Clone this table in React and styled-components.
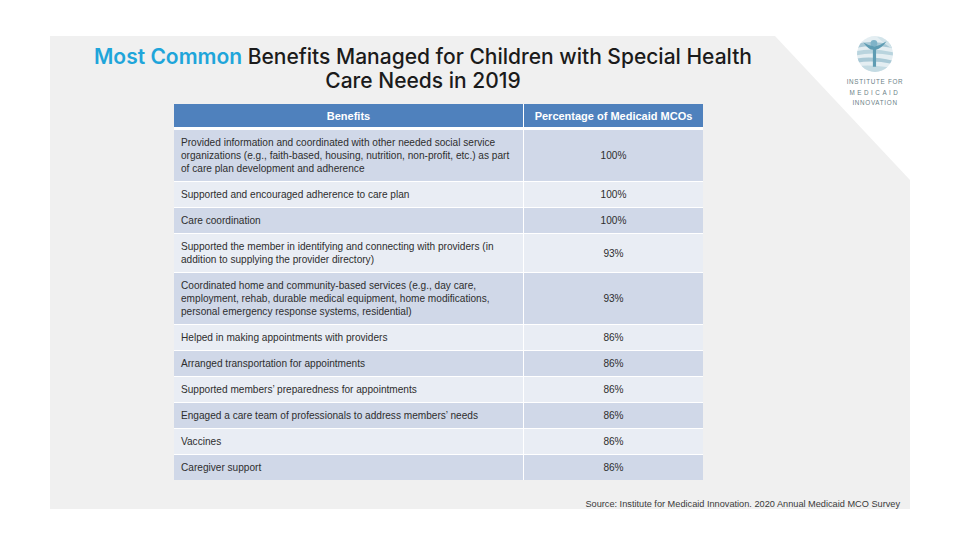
import React from "react";
import styled, { createGlobalStyle } from "styled-components";

const GlobalStyle = createGlobalStyle`
  html, body {
    margin: 0;
    padding: 0;
    background: #ffffff;
  }
  body {
    font-family: "Liberation Sans", Arial, sans-serif;
    width: 960px;
    height: 540px;
    overflow: hidden;
  }
`;

const rows = [
  {
    text:
      "Provided information and coordinated with other needed social service organizations (e.g., faith-based, housing, nutrition, non-profit, etc.) as part of care plan development and adherence",
    value: "100%",
  },
  { text: "Supported and encouraged adherence to care plan", value: "100%" },
  { text: "Care coordination", value: "100%" },
  {
    text:
      "Supported the member in identifying and connecting with providers (in addition to supplying the provider directory)",
    value: "93%",
  },
  {
    text:
      "Coordinated home and community-based services (e.g., day care, employment, rehab, durable medical equipment, home modifications, personal emergency response systems, residential)",
    value: "93%",
  },
  { text: "Helped in making appointments with providers", value: "86%" },
  { text: "Arranged transportation for appointments", value: "86%" },
  { text: "Supported members’ preparedness for appointments", value: "86%" },
  { text: "Engaged a care team of professionals to address members’ needs", value: "86%" },
  { text: "Vaccines", value: "86%" },
  { text: "Caregiver support", value: "86%" },
];

const Logo = () => (
  <LogoBox>
    <svg width="38" height="38" viewBox="0 0 36 36">
      <defs>
        <clipPath id="ring">
          <circle cx="18" cy="18" r="17" />
        </clipPath>
      </defs>
      <g clipPath="url(#ring)">
        <rect x="0" y="0" width="36" height="36" fill="#e4eef2" />
        <path d="M-2 9 Q14 4 38 10 L38 13 Q14 8 -2 13 Z" fill="#a9c9d6" />
        <path d="M-2 16 Q14 11 38 17 L38 20 Q14 15 -2 20 Z" fill="#b9d4de" />
        <path d="M-2 23 Q14 19 38 25 L38 28 Q14 23 -2 27 Z" fill="#a9c9d6" />
        <path d="M-2 30 Q14 27 38 32 L38 36 L-2 36 Z" fill="#c4dbe3" />
        <path d="M20 2 L36 2 L36 14 Q28 10 20 2 Z" fill="#d2e4ea" />
      </g>
      <circle cx="17" cy="8" r="3.2" fill="#7fb3c8" />
      <path d="M7 7 Q12 14 16 14 L16 30 L19 30 L19 14 Q24 13 29 6 Q23 10 17.5 11 Q12 10 7 7 Z" fill="#5e9cb3" />
    </svg>
    <LogoLine>INSTITUTE FOR</LogoLine>
    <LogoLine $wide>MEDICAID</LogoLine>
    <LogoLine>INNOVATION</LogoLine>
  </LogoBox>
);

export default function App() {
  return (
    <>
      <GlobalStyle />
      <Slide>
        <TopRow>
          <Title>
            <Accent>Most Common</Accent> Benefits Managed for Children with Special Health
            <br />
            Care Needs in 2019
          </Title>
          <Logo />
        </TopRow>
        <Table>
          <thead>
            <tr>
              <HeadCell $w={349}>Benefits</HeadCell>
              <HeadCell>Percentage of Medicaid MCOs</HeadCell>
            </tr>
          </thead>
          <tbody>
            {rows.map((row, i) => (
              <Row key={i} $dark={i % 2 === 0}>
                <TextCell>{row.text}</TextCell>
                <ValueCell>{row.value}</ValueCell>
              </Row>
            ))}
          </tbody>
        </Table>
        <Source>Source: Institute for Medicaid Innovation. 2020 Annual Medicaid MCO Survey</Source>
      </Slide>
    </>
  );
}

const Slide = styled.div`
  position: relative;
  isolation: isolate;
  margin: 36px 0 0 50px;
  width: 860px;
  padding-top: 9px;
  display: flex;
  flex-direction: column;

  &::before {
    content: "";
    position: absolute;
    inset: 0;
    background: #f0f0f0;
    clip-path: polygon(0 0, 725px 0, 860px 144px, 860px 100%, 0 100%);
    z-index: -1;
  }
`;

const TopRow = styled.div`
  display: flex;
  align-items: flex-start;
  height: 48px;
`;

const Title = styled.h1`
  width: 746px;
  margin: 0;
  text-align: center;
  font-family: Inter, "Liberation Sans", sans-serif;
  font-weight: 500;
  font-size: 21px;
  line-height: 24px;
  color: #1b1b1b;
`;

const Accent = styled.span`
  color: #1fa5da;
  font-weight: 600;
`;

const LogoBox = styled.div`
  margin: -10px 0 0 auto;
  width: 56px;
  padding-right: 7px;
  display: flex;
  flex-direction: column;
  align-items: center;

  svg {
    margin-bottom: 4px;
  }
`;

const LogoLine = styled.div`
  font-family: "Liberation Sans", Arial, sans-serif;
  font-size: 6.3px;
  line-height: 10.5px;
  letter-spacing: ${(p) => (p.$wide ? "2.5px" : "0.7px")};
  color: #6d7f88;
  white-space: nowrap;
`;

const Table = styled.table`
  margin: 11px 0 0 124px;
  width: 529px;
  border-collapse: collapse;
  table-layout: fixed;
  font-family: "Liberation Sans", Arial, sans-serif;
`;

const HeadCell = styled.th`
  width: ${(p) => (p.$w ? `${p.$w}px` : "auto")};
  background: #4f81bd;
  color: #ffffff;
  font-size: 11px;
  font-weight: bold;
  height: 23px;
  padding: 0;
  text-align: center;
  border-bottom: 3px solid #ffffff;
  border-right: 1px solid #ffffff;

  &:last-child {
    border-right: none;
  }
`;

const Row = styled.tr`
  background: ${(p) => (p.$dark ? "#d0d8e8" : "#e9edf4")};
  border-bottom: 1px solid #ffffff;

  &:last-child {
    border-bottom: none;
  }
`;

const TextCell = styled.td`
  padding: 6px 6px 6px 7px;
  font-size: 10.1px;
  line-height: 13px;
  color: #2e2e2e;
  border-right: 1px solid #ffffff;
  vertical-align: middle;
`;

const ValueCell = styled.td`
  padding: 6px;
  font-size: 10.1px;
  line-height: 13px;
  color: #2e2e2e;
  text-align: center;
  vertical-align: middle;
`;

const Source = styled.div`
  margin: 19px 10px 0 0;
  align-self: flex-end;
  font-family: "Liberation Sans", Arial, sans-serif;
  font-size: 9.2px;
  line-height: 10px;
  color: #3a3a3a;
`;
